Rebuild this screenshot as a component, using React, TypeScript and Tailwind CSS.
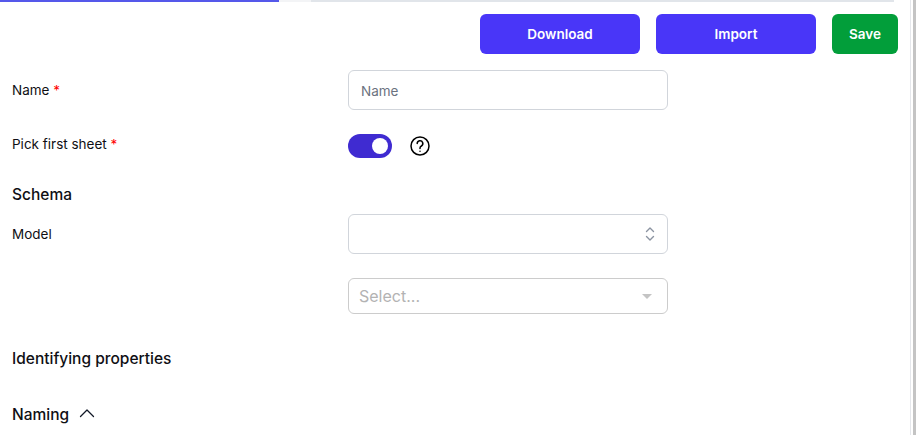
import React from "react";

const labelFont = "font-['Inter',sans-serif]";

function Required() {
  return <span className="text-[#ff0000]"> *</span>;
}

function FormRow({ label, children, className }: { label: React.ReactNode; children: React.ReactNode; className: string }) {
  return (
    <div className={`flex ${className}`}>
      <div className="w-[348px] shrink-0 pl-3 text-[13.5px] leading-5 text-[#0f0f14]">{label}</div>
      {children}
    </div>
  );
}

export default function App() {
  return (
    <div className={`relative h-[435px] w-[916px] overflow-hidden bg-white ${labelFont}`}>
      {/* Progress bar */}
      <div className="flex h-[2px] w-[894px] bg-[#e1e5ea]">
        <div className="h-full w-[279px] bg-[#5558ea]" />
        <div className="h-full w-[32px] bg-[#f3f4f6]" />
      </div>

      {/* Scrollbar edge */}
      <div className="absolute right-0 top-0 h-full w-[6px] border-l border-[#e5e7eb] bg-white">
        <div className="ml-[2px] h-full w-[3px] bg-[#c4c4c4]" />
      </div>

      {/* Actions */}
      <div className="flex justify-end gap-4 pr-[18px] pt-3">
        <button className="h-10 w-40 rounded-md bg-[#4936f8] text-[13.5px] font-semibold text-white">Download</button>
        <button className="h-10 w-40 rounded-md bg-[#4936f8] text-[13.5px] font-semibold text-white">Import</button>
        <button className="h-10 w-[66px] rounded-md bg-[#029e3a] text-[13.5px] font-semibold text-white">Save</button>
      </div>

      <FormRow className="mt-4 h-10 pt-[10px]" label={<>Name<Required /></>}>
        <div className="-mt-[10px] flex h-10 w-80 items-center rounded-md border border-[#d1d5db] px-3 pt-[2px] text-[13.5px] text-[#6b7280]">Name</div>
      </FormRow>

      <FormRow className="mt-[13px] h-[36px] pt-[11px]" label={<>Pick first sheet<Required /></>}>
        <div className="-mt-[2px] flex items-center gap-[18px]">
          <div className="flex h-6 w-11 items-center justify-end rounded-full bg-[#3f2bd1] pr-[2px]">
            <div className="mr-[2px] h-4 w-4 rounded-full bg-white" />
          </div>
          <svg width="20" height="20" viewBox="0 0 20 20" fill="none" stroke="#000" strokeWidth="1.5" strokeLinecap="round">
            <circle cx="10" cy="10" r="9" />
            <path d="M7.2 7.6a2.8 2.8 0 1 1 4.2 2.4c-.9.5-1.4 1-1.4 2v.4" />
            <path d="M10 15.2v.1" />
          </svg>
        </div>
      </FormRow>

      <div className="mt-6 pl-3 text-[15.5px] font-medium leading-6 text-[#0f0f14]">Schema</div>

      <FormRow className="mt-[7px] h-10 pt-[10px]" label="Model">
        <div className="-mt-[10px] flex h-10 w-80 items-center justify-end rounded-md border border-[#d1d5db] pr-[11px]">
          <svg width="12" height="18" viewBox="0 0 12 18" fill="none" stroke="#8b93a1" strokeWidth="1.4" strokeLinecap="round" strokeLinejoin="round">
            <path d="M2.5 6.5 6 3l3.5 3.5" />
            <path d="M2.5 11.5 6 15l3.5-3.5" />
          </svg>
        </div>
      </FormRow>

      <div className="mt-6 flex pl-[348px]">
        <div className="flex h-9 w-80 items-center justify-between rounded-md border border-[#cccccc] pl-[10px] pr-[15px] text-base text-[#b3b3b3]">
          <span>Select...</span>
          <div className="h-0 w-0 border-x-[5px] border-t-[5px] border-x-transparent border-t-[#c4c4c4]" />
        </div>
      </div>

      <div className="mt-[33px] pl-3 text-[15.5px] font-medium leading-6 text-[#0f0f14]">Identifying properties</div>

      <div className="mt-[32px] flex items-center gap-[10px] pl-3 text-[15.5px] font-medium leading-6 text-[#0f0f14]">
        <span>Naming</span>
        <svg width="16" height="10" viewBox="0 0 16 10" fill="none" stroke="#111827" strokeWidth="1.3" strokeLinecap="round" strokeLinejoin="round" className="-mt-1">
          <path d="M1.5 8.5 8 2l6.5 6.5" />
        </svg>
      </div>
    </div>
  );
}
